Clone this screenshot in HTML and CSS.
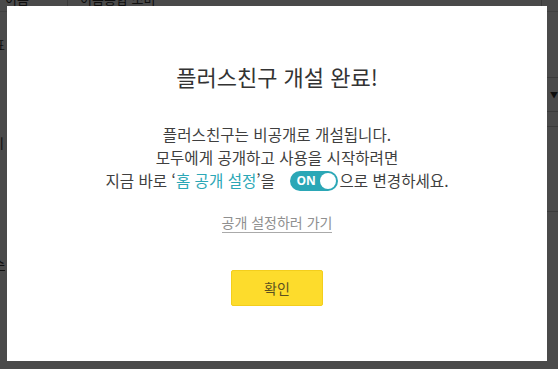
FILE: index.html
```html
<!DOCTYPE html>
<html lang="ko">
<head>
<meta charset="utf-8">
<title>플러스친구 개설 완료</title>
<link rel="stylesheet" href="styles.css">
</head>
<body>
<div class="page">
  <div class="r1">
    <div class="r1-lbl">이름</div>
    <div class="r1-val">이름통합 조미</div>
  </div>
  <div class="r2"><span class="frag frag-a">대표</span></div>
  <div class="r3"><div class="select"><span class="arrow">▼</span></div></div>
  <div class="r4">
    <span class="frag frag-b">이</span>
    <div class="area"></div>
  </div>
  <div class="r5"><span class="frag frag-c">필수</span></div>
</div>

<div class="backdrop">
  <div class="modal">
    <h2 class="title">플러스친구 개설 완료!</h2>
    <p class="desc">플러스친구는 비공개로 개설됩니다.<br>모두에게 공개하고 사용을 시작하려면<br>지금 바로 ‘<span class="hl">홈 공개 설정</span>’을 <span class="toggle"><span class="toggle-on">ON</span><span class="knob"></span></span>으로 변경하세요.</p>
    <a class="link" href="#">공개 설정하러 가기</a>
    <button class="confirm" type="button">확인</button>
  </div>
</div>
</body>
</html>
```

FILE: styles.css
```css
* { box-sizing: border-box; }
html, body { margin: 0; padding: 0; }
body {
  width: 558px;
  height: 369px;
  overflow: hidden;
  background: #fff;
  font-family: "Noto Sans CJK KR", "Noto Sans", sans-serif;
}

/* background page */
.page {
  color: #333;
  font-size: 13px;
}
.r1 {
  display: flex;
  height: 26px;
  margin-top: -14px;
  line-height: 26px;
  border-bottom: 1px solid #ddd;
}
.r1-lbl {
  width: 68px;
  padding-left: 5px;
  border-right: 1px solid #ccc;
}
.r1-val {
  width: 474px;
  padding-left: 12px;
  border-right: 1px solid #ccc;
}
.r2 {
  margin-top: 23px;
  line-height: 20px;
}
.frag { display: inline-block; }
.frag-a { margin-left: -19px; }
.r3 {
  display: flex;
  justify-content: flex-end;
  margin-top: 22px;
}
.select {
  width: 200px;
  height: 35px;
  margin-right: -4px;
  border: 1px solid #ccc;
  display: flex;
  align-items: center;
  justify-content: flex-end;
  padding-right: 3px;
}
.arrow { font-size: 8px; color: #333; }
.r4 {
  display: flex;
  justify-content: space-between;
  align-items: flex-start;
  margin-top: 14px;
}
.frag-b {
  margin-left: -8px;
  margin-top: 7px;
  line-height: 20px;
}
.area {
  width: 200px;
  height: 86px;
  margin-right: -4px;
  border: 1px solid #ccc;
}
.r5 {
  margin-top: 42px;
  line-height: 20px;
}
.frag-c {
  margin-left: -19px;
  text-decoration: underline;
}

/* modal */
.backdrop {
  position: fixed;
  inset: 0;
  background: rgba(0, 0, 0, 0.71);
  display: flex;
  padding: 6px 11px 8px 7px;
}
.modal {
  flex: 1;
  background: #fff;
  display: flex;
  flex-direction: column;
  align-items: center;
  padding-top: 54px;
  text-align: center;
}
.title {
  margin: 0;
  font-size: 22px;
  line-height: 32px;
  font-weight: 400;
  color: #333;
}
.desc {
  margin: 31px 0 0;
  font-size: 15.6px;
  line-height: 23px;
  color: #3f3f3f;
}
.hl { color: #2ba7b6; }
.toggle {
  display: inline-flex;
  align-items: center;
  justify-content: space-between;
  vertical-align: middle;
  width: 48px;
  height: 20px;
  margin: -3px 1px 0 11px;
  padding: 0 2px 0 6px;
  border-radius: 10px;
  background: #2ba7b6;
}
.toggle-on {
  color: #fff;
  font-family: "Open Sans", "Noto Sans", sans-serif;
  font-weight: 700;
  font-size: 12px;
  line-height: 20px;
}
.knob {
  width: 16px;
  height: 16px;
  border-radius: 50%;
  background: #fff;
}
.link {
  margin-top: 21px;
  display: inline-block;
  font-size: 14px;
  line-height: 19px;
  color: #8f8f8f;
  text-decoration: none;
  border-bottom: 1px solid #aaa;
}
.confirm {
  margin-top: 37px;
  width: 92px;
  height: 36px;
  border: 1px solid #f3ce1c;
  border-radius: 2px;
  background: #fddc2c;
  color: #5a5020;
  font-family: "Noto Sans CJK KR", "Noto Sans", sans-serif;
  font-size: 14px;
  padding: 0;
}
```
